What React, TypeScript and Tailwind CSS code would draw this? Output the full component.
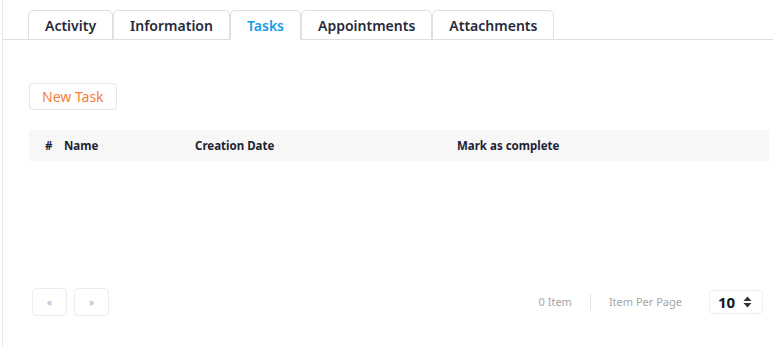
import { useState } from "react";

const tabs = ["Activity", "Information", "Tasks", "Appointments", "Attachments"];

export default function App() {
  const [active, setActive] = useState("Tasks");

  return (
    <div
      className="h-[346px] w-[773px] bg-white overflow-hidden"
      style={{ fontFamily: '"Noto Sans", "Open Sans", sans-serif' }}
    >
      <div className="ml-[2px] h-full border-l border-[#e5e5e5] flex flex-col">
        {/* tabs */}
        <div className="flex pl-[25px] pt-[10px] border-b border-[#dcdfe3]">
          {tabs.map((t) => (
            <button
              key={t}
              onClick={() => setActive(t)}
              className={`h-[30px] px-[16px] -mb-px rounded-t-[5px] border border-[#dcdfe3] text-[14px] font-semibold ${
                active === t
                  ? "border-b-white bg-white text-[#1a9be6] font-normal"
                  : "bg-white text-[#262a3b]"
              }`}
            >
              {t}
            </button>
          ))}
        </div>

        <div className="flex-1 flex flex-col pl-[26px] pr-[4px]">
          <div className="pt-[43px]">
            <button className="h-[27px] px-[12px] rounded-[4px] border border-[#e3e6e8] text-[14px] text-[#f5803e]">
              New Task
            </button>
          </div>

          <div className="mt-[20px] h-[31px] bg-[#f7f7f7] flex items-center text-[11.5px] font-bold text-[#1e2235]">
            <span className="pl-[16px] w-[35px]">#</span>
            <span className="w-[131px]">Name</span>
            <span className="w-[262px]">Creation Date</span>
            <span>Mark as complete</span>
          </div>

          <div className="flex-1" />

          <div className="flex items-center justify-between pb-[30px] pr-[6px]">
            <div className="flex gap-[7px] pl-[3px]">
              <button className="w-[35px] h-[28px] rounded-[4px] border border-[#ededed] text-[10px] text-[#a7b0bb]">
                «
              </button>
              <button className="w-[35px] h-[28px] rounded-[4px] border border-[#ededed] text-[10px] text-[#a7b0bb]">
                »
              </button>
            </div>
            <div className="flex items-center text-[11px] text-[#a5a5a5]">
              <span>0 Item</span>
              <span className="mx-[18px] h-[16px] w-px bg-[#e3e3e3]" />
              <span>Item Per Page</span>
              <div className="ml-[27px] w-[54px] h-[24px] rounded-[4px] border border-[#efefef] flex items-center pl-[8px] gap-[8px]">
                <span className="text-[15px] font-bold text-[#111827]">10</span>
                <svg width="9" height="12" viewBox="0 0 9 12">
                  <path d="M4.5 0.5 L8.5 5 H0.5 Z" fill="#333" />
                  <path d="M4.5 11.5 L8.5 7 H0.5 Z" fill="#333" />
                </svg>
              </div>
            </div>
          </div>
        </div>
      </div>
    </div>
  );
}
